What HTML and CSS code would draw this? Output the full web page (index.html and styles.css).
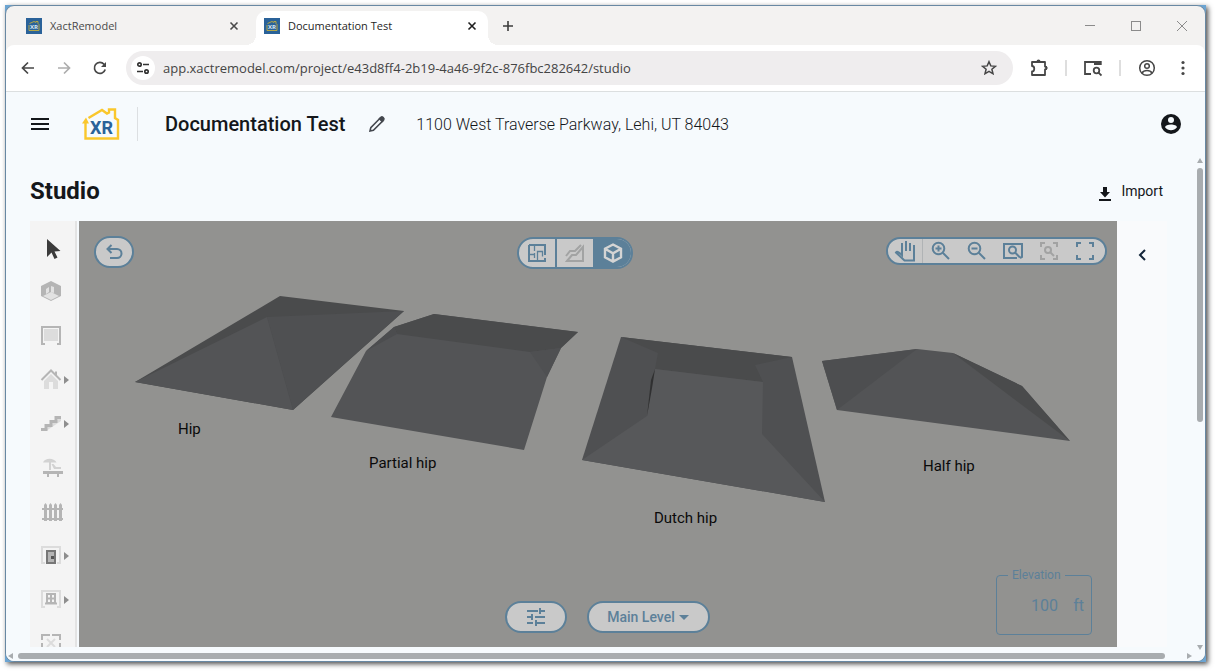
FILE: index.html
```html
<!DOCTYPE html>
<html lang="en">
<head>
  <meta charset="UTF-8">
  <title>Documentation Test</title>
  <link rel="stylesheet" href="styles.css">
</head>
<body>
  <svg class="defs" aria-hidden="true">
    <symbol id="favicon" viewBox="0 0 16 16">
      <rect width="16" height="16" fill="#2a6299"/>
      <path d="M3.500 5.500L8 3.500l2 1V3.500h2v2l1 1v6h-10V7" fill="none" stroke="#c3ae3c" stroke-width=".9"/>
      <text x="8" y="11" font-size="6" font-weight="700" text-anchor="middle" fill="#dfe8f0">XR</text>
    </symbol>
    <symbol id="cross" viewBox="0 0 10 10">
      <path d="M1.500 1.500l7 7M8.500 1.500l-7 7" fill="none" stroke="currentColor" stroke-width="1.600"/>
    </symbol>
    <symbol id="more" viewBox="0 0 5 8">
      <path d="M0 0l5 4-5 4z" fill="#8e8e8e"/>
    </symbol>
  </svg>

  <div class="frame">
    <div class="window">
      <div class="tabs">
        <div class="tab">
          <svg width="16" height="16"><use href="#favicon"/></svg>
          <button class="tab-title">XactRemodel</button>
          <button class="tab-close" aria-label="Close tab"><svg width="10" height="10"><use href="#cross"/></svg></button>
        </div>
        <div class="tab active">
          <svg width="16" height="16"><use href="#favicon"/></svg>
          <button class="tab-title">Documentation Test</button>
          <button class="tab-close" aria-label="Close tab"><svg width="10" height="10"><use href="#cross"/></svg></button>
        </div>
        <button class="new-tab" aria-label="New tab">
          <svg width="12" height="12" viewBox="0 0 12 12"><path d="M6 1v10M1 6h10" stroke="#3c3c3c" stroke-width="1.600"/></svg>
        </button>
        <div class="window-buttons">
          <button aria-label="Minimize"><svg width="12" height="12" viewBox="0 0 12 12"><path d="M1 5.500h10" stroke="#8b8b8b"/></svg></button>
          <button aria-label="Maximize"><svg width="12" height="12" viewBox="0 0 12 12"><rect x="1.500" y="1.500" width="9" height="9" fill="none" stroke="#8b8b8b"/></svg></button>
          <button aria-label="Close"><svg width="12" height="12" viewBox="0 0 12 12"><path d="M1 1l10 10M11 1L1 11" stroke="#8b8b8b"/></svg></button>
        </div>
      </div>

      <div class="toolbar">
        <button class="nav" aria-label="Back"><svg width="16" height="16" viewBox="0 0 16 16"><path d="M14 8H3M8 2.500L2.500 8 8 13.500" fill="none" stroke="#474747" stroke-width="1.700"/></svg></button>
        <button class="nav" aria-label="Forward"><svg width="16" height="16" viewBox="0 0 16 16"><path d="M2 8h11M8 2.500L13.500 8 8 13.500" fill="none" stroke="#adadad" stroke-width="1.700"/></svg></button>
        <button class="nav" aria-label="Reload"><svg width="16" height="16" viewBox="0 0 16 16"><path d="M13.200 9.500A5.500 5.500 0 1 1 12 4.200L13.500 6" fill="none" stroke="#474747" stroke-width="1.700"/><path d="M14 2v5H9z" fill="#474747"/></svg></button>
        <div class="omnibox">
          <button class="site-info" aria-label="Site information">
            <svg width="14" height="14" viewBox="0 0 14 14" fill="none" stroke="#333" stroke-width="1.700"><circle cx="3.500" cy="3.500" r="1.700"/><path d="M7 3.500h6M1 10.500h6"/><circle cx="10.500" cy="10.500" r="1.700"/></svg>
          </button>
          <input class="url" type="text" aria-label="Address" value="app.xactremodel.com/project/e43d8ff4-2b19-4a46-9f2c-876fbc282642/studio">
          <button class="star" aria-label="Bookmark">
            <svg width="16" height="16" viewBox="0 0 16 16"><path d="M8 1.700l1.800 4.200 4.600.4-3.500 3 1.100 4.500L8 11.400l-4 2.400 1.100-4.500-3.500-3 4.600-.4z" fill="none" stroke="#474747" stroke-width="1.500"/></svg>
          </button>
        </div>
        <button class="ext" aria-label="Extensions">
          <svg width="18" height="18" viewBox="0 0 18 18"><path d="M2 3h13v4.500a1.500 1.500 0 0 1 0 3V16H2v-3.500c3 0 3-5.500 0-5.500z" fill="none" stroke="#474747" stroke-width="1.800" stroke-linejoin="round"/><path d="M6.500 2.500a2 2 0 0 1 4 0zM15.500 7a2 2 0 0 1 0 4z" fill="#474747"/></svg>
        </button>
        <span class="sep"></span>
        <button class="ext" aria-label="Search side panel">
          <svg width="18" height="18" viewBox="0 0 18 18" fill="none" stroke="#474747" stroke-width="1.800"><path d="M7 15H1V3h15.500v3"/><path d="M10 2h7.500v4H10z" fill="#474747" stroke="none"/><circle cx="12.500" cy="11.500" r="2.800"/><path d="M14.300 13.300l3.200 3.200"/></svg>
        </button>
        <span class="sep"></span>
        <button class="ext" aria-label="Profile">
          <svg width="18" height="18" viewBox="0 0 18 18" fill="none" stroke="#474747" stroke-width="1.500"><circle cx="9" cy="9" r="7.300"/><circle cx="9" cy="7" r="2.300"/><path d="M4 14c2-3.200 8-3.200 10 0"/></svg>
        </button>
        <button class="ext" aria-label="Browser menu">
          <svg width="4" height="16" viewBox="0 0 4 16" fill="#474747"><circle cx="2" cy="2.500" r="1.600"/><circle cx="2" cy="8" r="1.600"/><circle cx="2" cy="13.500" r="1.600"/></svg>
        </button>
      </div>

      <div class="page">
        <header>
          <button class="menu" aria-label="Menu">
            <svg width="18" height="12" viewBox="0 0 18 12"><path d="M0 1h18M0 6h18M0 11h18" stroke="#14171b" stroke-width="2"/></svg>
          </button>
          <a class="logo" href="#" aria-label="XR home">
            <svg width="38" height="34" viewBox="0 0 38 34">
              <path d="M6.500 11L20 3l5 3.500 2-1V2.500h6v8.500l3 2v18.500H3.500V14" fill="none" stroke="#fac72c" stroke-width="2.400"/>
              <path d="M0 16.500L4 10.500l3 6z" fill="#fac72c"/>
              <text x="19.500" y="27" font-size="18" font-weight="700" text-anchor="middle" fill="#2a6299">XR</text>
            </svg>
          </a>
          <h1>Documentation Test</h1>
          <button class="edit" aria-label="Edit project">
            <svg width="18" height="18" viewBox="0 0 18 18" fill="none" stroke="#44474e" stroke-width="1.600"><path d="M2 16l.8-3.400L12 3.300l2.700 2.700-9.300 9.300z"/><path d="M11.500 3.800l1.700-1.700c1-.8 3.400 1.300 2.600 2.600l-1.700 1.700z" fill="#44474e"/></svg>
          </button>
          <span class="address">1100 West Traverse Parkway, Lehi, UT 84043</span>
          <button class="account" aria-label="Account">
            <svg width="20" height="20" viewBox="0 0 20 20"><circle cx="10" cy="10" r="10" fill="#14171b"/><circle cx="10" cy="6" r="3" fill="#f6fafd"/><path d="M4 13.300c.5-3.800 11.500-3.800 12 0-2.800 4-9.200 4-12 0z" fill="#f6fafd"/></svg>
          </button>
        </header>

        <div class="scroller">
          <main>
            <div class="title-row">
              <h2>Studio</h2>
              <button class="import">
                <svg width="12" height="14" viewBox="0 0 12 14"><path d="M4 0h4v5h3L6 10.500 1 5h3zM0 12h12v2H0z" fill="#14171b"/></svg>
                Import
              </button>
            </div>

            <div class="studio">
              <nav class="tools">
                <button aria-label="Select"><svg width="24" height="24" viewBox="0 0 24 24"><path d="M8 3v18l4.500-4.500 3 6.500 3-1.500-3-6 6-.5z" fill="#3b3b3b"/></svg></button>
                <button aria-label="Room">
                  <svg width="24" height="24" viewBox="0 0 24 24"><path d="M12 1l10 5v10l-10 5-10-5V6z" fill="#b5b5b5"/><path d="M12 12l8 4-8 4-8-4zM7 9l3-2v5l-3 2zM12 6l3 1v6l-3-1z" fill="#e2e2e2"/></svg>
                </button>
                <button aria-label="Wall">
                  <svg width="24" height="24" viewBox="0 0 24 24"><path d="M5 5h14v12H5z" fill="#dcdcdc"/><path d="M6 20H3V3h18v17h-3" fill="none" stroke="#b5b5b5" stroke-width="2"/></svg>
                </button>
                <button aria-label="Roof">
                  <svg width="24" height="24" viewBox="0 0 24 24"><path d="M5 13l7-7 7 7v8h-5v-7h-4v7H5z" fill="#dcdcdc"/><path d="M2.500 12L12 2.500l9.500 9.500M17 3.500V8" fill="none" stroke="#b5b5b5" stroke-width="2"/></svg>
                  <svg width="5" height="8"><use href="#more"/></svg>
                </button>
                <button aria-label="Stairs">
                  <svg width="24" height="24" viewBox="0 0 24 24"><path d="M3 19L22 5v4L7 19z" fill="#dcdcdc"/><path d="M2 17.500h5v-4h5v-4h5v-4h5" fill="none" stroke="#b5b5b5" stroke-width="3"/></svg>
                  <svg width="5" height="8"><use href="#more"/></svg>
                </button>
                <button aria-label="Outdoor">
                  <svg width="24" height="24" viewBox="0 0 24 24"><path d="M4 6.500c2-5 11-5 13.500 0zM10 5h2v9h-2zM12.500 8h2l2.500 3h5v2h-7z" fill="#d2d2d2"/><path d="M4 15h20v3h-4v3h-2v-3h-8v3H8v-3H4z" fill="#b5b5b5"/></svg>
                </button>
                <button aria-label="Fence">
                  <svg width="24" height="24" viewBox="0 0 24 24"><path d="M5 21V5l1.500-2L8 5v16zM10 21V5l1.500-2L13 5v16zM15 21V5l1.500-2L18 5v16zM20 21V5l1.500-2L23 5v16zM3 8h21v2H3zM3 18h21v2H3z" fill="#b5b5b5"/></svg>
                </button>
                <button aria-label="Door">
                  <svg width="24" height="24" viewBox="0 0 24 24"><path d="M6 19H3V3h18v16h-3" fill="none" stroke="#dcdcdc" stroke-width="2"/><path d="M8 7h8v12H8z" fill="#b5b5b5" stroke="#777" stroke-width="2"/><path d="M12 12h3v3h-3z" fill="#555"/></svg>
                  <svg width="5" height="8"><use href="#more"/></svg>
                </button>
                <button aria-label="Window">
                  <svg width="24" height="24" viewBox="0 0 24 24"><path d="M6 19H3V3h18v16h-3" fill="none" stroke="#dcdcdc" stroke-width="2"/><path d="M8 6h8v9H8zM12 6v9M8 10.500h8M6 15.500h12" fill="none" stroke="#b5b5b5" stroke-width="2"/></svg>
                  <svg width="5" height="8"><use href="#more"/></svg>
                </button>
                <button aria-label="Opening">
                  <svg width="24" height="24" viewBox="0 0 24 24"><path d="M3 8V3h8M13 3h8v5M3 11v9M21 11v9" fill="none" stroke="#b5b5b5" stroke-width="2"/><path d="M8 7l8 8M16 7l-8 8" stroke="#dcdcdc" stroke-width="2"/></svg>
                </button>
              </nav>

              <section class="canvas">
                <svg class="scene" viewBox="79 221 1038 426" preserveAspectRatio="xMinYMin meet">
                  <!-- hip -->
                  <path d="M135 382L280 296 404 311 293 410z" fill="#4a4b4c"/>
                  <path d="M267 317L404 311 293 410z" fill="#4f5052"/>
                  <path d="M135 382L267 317 293 410z" fill="#535456"/>
                  <!-- partial hip -->
                  <path d="M331 417L366 351 394 327 434 314 578 332 561 348 547 377 524 450z" fill="#535456"/>
                  <path d="M394 327L434 314 578 332 561 348 530 352 397 334z" fill="#4a4b4c"/>
                  <path d="M366 351L394 327 397 334z" fill="#4c4d4f"/>
                  <path d="M530 352L561 348 547 377z" fill="#4f5052"/>
                  <!-- dutch hip -->
                  <path d="M582 460L621 337 792 357 825 502z" fill="#4f5052"/>
                  <path d="M621 337L792 357 755 365 763 382 655 369 658 353z" fill="#4a4b4c"/>
                  <path d="M582 460L647 416 655 369 763 382 762 434 825 502z" fill="#57585a"/>
                  <path d="M655 369L651 380 647 416 652 388z" fill="#303031"/>
                  <!-- half hip -->
                  <path d="M822 361L917 349 953 353 1022 386 1070 441 837 410z" fill="#535456"/>
                  <path d="M822 361L917 349 837 410z" fill="#4d4e50"/>
                  <path d="M953 353L1022 386 1070 441z" fill="#4a4b4c"/>
                  <text x="178" y="434">Hip</text>
                  <text x="369" y="468">Partial hip</text>
                  <text x="654" y="523">Dutch hip</text>
                  <text x="923" y="471">Half hip</text>
                </svg>

                <div class="top-bar">
                  <button class="pill undo" aria-label="Undo">
                    <svg width="18" height="18" viewBox="0 0 18 18" fill="none" stroke="currentColor" stroke-width="2"><path d="M6.500 2L2.500 6l4 4M3 6h9a4.500 4.500 0 0 1 0 9H5"/></svg>
                  </button>
                  <div class="modes">
                    <button aria-label="Floor plan">
                      <svg width="18" height="18" viewBox="0 0 18 18" fill="none" stroke="currentColor"><path d="M1 1h16v10M17 14v3H1V1" stroke-width="2"/><path d="M1 10.500h5M6.500 9v5M6.500 2v5M9.500 16V7.500h5v5" stroke-width="1.300"/></svg>
                    </button>
                    <button class="off" aria-label="Terrain">
                      <svg width="20" height="20" viewBox="0 0 20 20" fill="none" stroke="currentColor" stroke-width="2"><path d="M1 13l4-5h5l6-6M2 18l5-6h4l7-8v14z"/></svg>
                    </button>
                    <button class="on" aria-label="3D view">
                      <svg width="20" height="20" viewBox="0 0 20 20" fill="none" stroke="currentColor" stroke-width="2.400"><path d="M10 1.500l8 4.300v8.500l-8 4.300-8-4.300V5.800zM2 5.800l8 4.500 8-4.500M10 10.300v8"/></svg>
                    </button>
                  </div>
                  <div class="zoom">
                    <button class="hand" aria-label="Pan">
                      <svg width="22" height="24" viewBox="0 0 22 24" fill="none" stroke="currentColor" stroke-width="2"><path d="M8 13V4M12 12V2M16 12V4M20 6v15.500H10.500L2 13.500c1-1.500 3-.5 6 2.500V12"/></svg>
                    </button>
                    <button aria-label="Zoom in">
                      <svg width="20" height="20" viewBox="0 0 20 20" fill="none" stroke="currentColor" stroke-width="2"><circle cx="7.500" cy="7.500" r="5.800"/><path d="M11.800 11.800l6.200 6.200M4.500 7.500h6M7.500 4.500v6"/></svg>
                    </button>
                    <button aria-label="Zoom out">
                      <svg width="20" height="20" viewBox="0 0 20 20" fill="none" stroke="currentColor" stroke-width="2"><circle cx="7.500" cy="7.500" r="5.800"/><path d="M11.800 11.800l6.200 6.200M4.500 7.500h6"/></svg>
                    </button>
                    <button aria-label="Zoom to window">
                      <svg width="20" height="20" viewBox="0 0 20 20" fill="none" stroke="currentColor" stroke-width="2"><path d="M14 17H1V3h18v13l-2 1"/><circle cx="9.500" cy="9" r="3.500"/><path d="M12 11.500l5 5"/></svg>
                    </button>
                    <button class="off" aria-label="Zoom to selection">
                      <svg width="20" height="20" viewBox="0 0 20 20" fill="none" stroke="currentColor" stroke-width="2"><path d="M2 6V2h4M14 2h4v4M18 14v4h-4M6 18H2v-4"/><circle cx="9" cy="9" r="3"/><path d="M11 11l4 4"/></svg>
                    </button>
                    <button aria-label="Fit to screen">
                      <svg width="20" height="20" viewBox="0 0 20 20" fill="none" stroke="currentColor" stroke-width="2"><path d="M2 6V2h4M14 2h4v4M18 14v4h-4M6 18H2v-4"/></svg>
                    </button>
                  </div>
                </div>

                <div class="bottom-bar">
                  <div class="level-bar">
                    <button class="pill settings" aria-label="View settings">
                      <svg width="20" height="20" viewBox="0 0 20 20" fill="none" stroke="currentColor" stroke-width="2"><path d="M1 4h11M15 4h4M14 1v6M1 10h4M9 10h10M6 7v6M1 16h6M10 16h9M10 13v6"/></svg>
                    </button>
                    <button class="pill level">Main Level
                      <svg width="10" height="5" viewBox="0 0 10 5"><path d="M0 0h10L5 5z" fill="currentColor"/></svg>
                    </button>
                  </div>
                  <fieldset class="elevation">
                    <legend><label for="elevation">Elevation</label></legend>
                    <input id="elevation" type="text" value="100">
                    <span>ft</span>
                  </fieldset>
                </div>
              </section>

              <aside class="panel">
                <button aria-label="Open panel">
                  <svg width="8" height="12" viewBox="0 0 8 12"><path d="M7 1L2 6l5 5" fill="none" stroke="#14253a" stroke-width="2"/></svg>
                </button>
              </aside>
            </div>
          </main>

          <div class="vscroll">
            <svg width="6" height="5" viewBox="0 0 6 5"><path d="M0 5l3-5 3 5z" fill="#a8acaf"/></svg>
            <span class="thumb"></span>
            <span class="rest"></span>
            <svg width="6" height="5" viewBox="0 0 6 5"><path d="M0 0l3 5 3-5z" fill="#a8acaf"/></svg>
          </div>
        </div>

        <div class="hscroll">
          <svg width="5" height="6" viewBox="0 0 5 6"><path d="M5 0L0 3l5 3z" fill="#a8acaf"/></svg>
          <span class="thumb"></span>
          <svg width="5" height="6" viewBox="0 0 5 6"><path d="M0 0l5 3-5 3z" fill="#a8acaf"/></svg>
        </div>
      </div>
    </div>
  </div>
</body>
</html>
```
FILE: styles.css
```css
* {
  box-sizing: border-box;
}

body {
  margin: 0;
  height: 100vh;
  padding: 5px 9px 9px 5px;
  background: #fff;
  font-family: Roboto, sans-serif;
  color: #14171b;
}

button {
  display: flex;
  align-items: center;
  justify-content: center;
  padding: 0;
  border: none;
  background: none;
  font-family: inherit;
  color: inherit;
  cursor: pointer;
}

svg {
  display: block;
  flex: none;
}

.defs {
  display: none;
}

.frame {
  height: 100%;
  background: #6ba4d2;
  box-shadow: 2px 2px 5px rgba(0, 0, 0, 0.7);
}

.window {
  display: flex;
  flex-direction: column;
  height: 100%;
  border: 1px solid #6888a3;
  border-radius: 9px;
  background: #f3f2f1;
  overflow: hidden;
}

/* browser tabs */
.tabs {
  display: flex;
  height: 39px;
  padding-left: 12px;
  font-family: "Open Sans", sans-serif;
}

.tab {
  position: relative;
  display: flex;
  align-items: center;
  gap: 8px;
  width: 232px;
  margin-top: 5px;
  padding: 0 10px 5px 8px;
  color: #4a4a4a;
}

.tab.active {
  margin-left: 6px;
  background: #fff;
  border-radius: 10px 10px 0 0;
  color: #1f1f1f;
}

.tab.active::before,
.tab.active::after {
  content: "";
  position: absolute;
  bottom: 0;
  width: 10px;
  height: 10px;
}

.tab.active::before {
  right: 100%;
  background: radial-gradient(circle at 0 0, transparent 10px, #fff 10px);
}

.tab.active::after {
  left: 100%;
  background: radial-gradient(circle at 100% 0, transparent 10px, #fff 10px);
}

.tab-title {
  flex: 1;
  justify-content: flex-start;
  font-size: 11px;
}

.tab-close {
  width: 12px;
  height: 16px;
}

.new-tab {
  width: 40px;
}

.window-buttons {
  display: flex;
  margin-left: auto;
}

.window-buttons button {
  width: 46px;
}

/* address row */
.toolbar {
  display: flex;
  align-items: center;
  height: 47px;
  padding: 0 4px;
  background: #fff;
  border-bottom: 1px solid #dcdfe0;
  border-radius: 8px 8px 0 0;
}

.nav {
  width: 36px;
  height: 34px;
}

.omnibox {
  display: flex;
  flex: 1;
  align-items: center;
  height: 34px;
  margin: 0 8px;
  padding: 0 16px 0 5px;
  border-radius: 17px;
  background: #efedee;
}

.site-info {
  width: 24px;
  height: 24px;
  border-radius: 50%;
  background: #fff;
}

.url {
  flex: 1;
  min-width: 0;
  padding: 0 8px;
  border: none;
  background: none;
  font-family: "Open Sans", sans-serif;
  font-size: 13px;
  color: #444;
}

.ext {
  width: 36px;
  height: 34px;
}

.sep {
  width: 2px;
  height: 16px;
  margin: 0 8px;
  background: #dedede;
}

/* app */
.page {
  display: flex;
  flex: 1;
  flex-direction: column;
  min-height: 0;
  background: #f6fafd;
}

header {
  display: flex;
  align-items: center;
  height: 64px;
  padding: 0 24px;
}

.menu {
  width: 20px;
}

.logo {
  padding: 0 17px 0 32px;
  border-right: 1px solid #dcdfe2;
}

h1 {
  margin: 0 23px 0 27px;
  font-size: 20px;
  font-weight: 500;
}

.address {
  margin-left: 30px;
  font-size: 16px;
  font-weight: 300;
}

.account {
  margin-left: auto;
}

.scroller {
  display: flex;
  flex: 1;
  min-height: 0;
}

main {
  display: flex;
  flex: 1;
  flex-direction: column;
  min-width: 0;
  padding: 0 28px 3px 24px;
}

.title-row {
  display: flex;
  align-items: center;
  justify-content: space-between;
  height: 65px;
  padding: 5px 4px 0 0;
}

h2 {
  margin: 0;
  font-size: 24px;
  font-weight: 700;
}

.import {
  gap: 10px;
  font-size: 14px;
}

.import svg {
  margin-top: 6px;
}

.studio {
  display: flex;
  flex: 1;
  min-height: 0;
}

.tools {
  width: 47px;
  margin-right: 2px;
  padding-top: 5px;
  border-right: 2px solid #e3e3e3;
  background: #f4f4f4;
  overflow: hidden;
}

.tools button {
  justify-content: flex-start;
  gap: 1px;
  width: 100%;
  height: 44px;
  padding-left: 9px;
}

.canvas {
  position: relative;
  display: flex;
  flex: 1;
  flex-direction: column;
  justify-content: space-between;
  min-width: 0;
  background: #929290;
  color: #5c8099;
}

.scene {
  position: absolute;
  inset: 0;
  width: 100%;
  height: 100%;
}

.scene text {
  font-size: 15px;
  fill: #0a0a0a;
}

.top-bar,
.bottom-bar {
  position: relative;
  display: grid;
  grid-template-columns: 1fr auto 1fr;
}

.top-bar {
  align-items: start;
  padding: 15px 10px 0 15px;
}

.bottom-bar {
  align-items: end;
  padding: 0 25px 12px;
}

.pill {
  height: 32px;
  border: 2px solid #5c8099;
  border-radius: 16px;
  background: #c9c9c9;
}

.undo {
  width: 40px;
}

.modes,
.zoom {
  display: flex;
  border: 2px solid #5c8099;
  border-radius: 16px;
  background: #c9c9c9;
  overflow: hidden;
}

.modes {
  height: 32px;
  margin: 1px 52px 0 0;
}

.modes button {
  width: 38px;
  border-right: 2px solid #5c8099;
}

.modes .on {
  width: 36px;
  border-right: none;
  background: #5c8099;
  color: #d4d4d4;
}

.zoom {
  height: 28px;
  margin-top: 1px;
  padding-right: 2px;
  justify-self: end;
}

.zoom button {
  width: 36px;
}

.zoom .hand {
  width: 35px;
  border-right: 1px solid #b0b3b5;
}

.modes .off,
.zoom .off {
  color: #a2a3a3;
}

.level-bar {
  display: flex;
  grid-column: 2;
  gap: 20px;
  margin-left: 18px;
  padding-bottom: 2px;
}

.settings {
  width: 62px;
}

.level {
  gap: 4px;
  width: 123px;
  font-size: 14px;
  font-weight: 500;
}

.elevation {
  display: flex;
  align-items: center;
  justify-self: end;
  width: 96px;
  height: 67px;
  margin: 0;
  padding: 0 7px 6px;
  border: 1px solid #5c8099;
  border-radius: 4px;
}

.elevation legend {
  margin-left: 4px;
  padding: 0 4px;
  font-size: 12px;
}

.elevation input {
  width: 54px;
  padding: 0;
  border: none;
  background: none;
  font-family: inherit;
  font-size: 16px;
  text-align: right;
  color: inherit;
}

.elevation span {
  margin-left: auto;
}

.panel {
  width: 50px;
  background: #f9fafc;
}

.panel button {
  width: 100%;
  height: 68px;
}

/* scrollbars */
.vscroll {
  display: flex;
  flex-direction: column;
  align-items: center;
  width: 10px;
  padding-top: 2px;
}

.vscroll .thumb {
  flex: 253;
  width: 6px;
  margin-top: 5px;
}

.vscroll .rest {
  flex: 222;
}

.thumb {
  border-radius: 3px;
  background: #a8acaf;
}

.hscroll {
  display: flex;
  align-items: center;
  height: 11px;
  padding: 2px 13px 2px 2px;
}

.hscroll .thumb {
  flex: 1;
  height: 6px;
  margin: 0 22px 0 5px;
}
```
